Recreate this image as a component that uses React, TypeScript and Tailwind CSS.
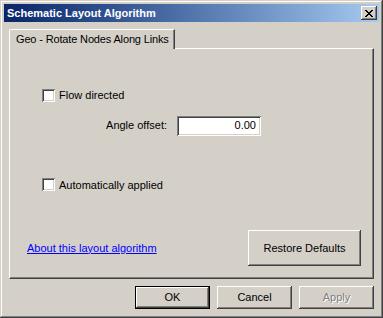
const raised =
  "bg-[#d4d0c8] shadow-[inset_-1px_-1px_#404040,inset_1px_1px_#ffffff,inset_-2px_-2px_#808080,inset_2px_2px_#d4d0c8]";
const sunken =
  "bg-white shadow-[inset_1px_1px_#808080,inset_-1px_-1px_#ffffff,inset_2px_2px_#404040,inset_-2px_-2px_#d4d0c8]";

function CheckBox({ label }: { label: string }) {
  return (
    <div className="flex flex-row items-center gap-[4px]">
      <div className={`w-[13px] h-[13px] ${sunken}`} />
      <span>{label}</span>
    </div>
  );
}

function Button({
  label,
  width,
  height,
  isDefault,
  disabled,
}: {
  label: string;
  width: string;
  height: string;
  isDefault?: boolean;
  disabled?: boolean;
}) {
  return (
    <div
      className={`${width} ${height} ${
        isDefault ? "border border-black" : ""
      } flex`}
    >
      <div
        className={`flex-1 flex items-center justify-center ${raised} ${
          disabled ? "text-[#808080] [text-shadow:1px_1px_#ffffff]" : "text-black"
        }`}
      >
        {label}
      </div>
    </div>
  );
}

export default function App() {
  return (
    <div
      className="w-[383px] h-[318px] bg-[#d4d0c8] p-[4px] flex flex-col text-[11px] text-black shadow-[inset_-1px_-1px_#404040,inset_1px_1px_#d4d0c8,inset_-2px_-2px_#808080,inset_2px_2px_#ffffff]"
      style={{ fontFamily: "Tahoma, 'Liberation Sans', Arial, sans-serif" }}
    >
      {/* title bar */}
      <div className="h-[18px] flex flex-row items-center justify-between pl-[3px] pr-[2px] bg-gradient-to-r from-[#0a246a] to-[#a6caf0]">
        <span className="text-white font-bold text-[11px] leading-none">
          Schematic Layout Algorithm
        </span>
        <div
          className={`w-[16px] h-[14px] flex items-center justify-center ${raised}`}
        >
          <svg width="8" height="7" viewBox="0 0 8 7">
            <path
              d="M0 0h2v1h1v1h2v-1h1v-1h2v1h-1v1h-1v1h-1v1h1v1h1v1h1v1h-2v-1h-1v-1h-2v1h-1v1h-2v-1h1v-1h1v-1h1v-1h-1v-1h-1v-1h-1z"
              fill="black"
            />
          </svg>
        </div>
      </div>

      {/* tabs */}
      <div className="mt-[7px] ml-[5px] mr-[5px] flex flex-col">
        <div className="flex flex-row">
          <div className="w-[166px] h-[20px] flex items-center whitespace-nowrap tracking-[-0.15px] pl-[6px] pb-[1px] border-t border-l border-white border-r border-r-[#404040] rounded-tl-[2px] shadow-[inset_-1px_0_#808080] relative z-10 -mb-[1px] bg-[#d4d0c8]">
            Geo - Rotate Nodes Along Links
          </div>
        </div>
        <div className="h-[231px] border-t border-l border-white border-b border-r border-b-[#404040] border-r-[#404040] shadow-[inset_-1px_-1px_#808080] flex flex-col pl-[32px] pr-[12px]">
          <div className="mt-[38px]">
            <CheckBox label="Flow directed" />
          </div>
          <div className="mt-[12px] flex flex-row items-center">
            <span className="w-[125px] text-right">Angle offset:</span>
            <div
              className={`ml-[10px] w-[84px] h-[20px] flex items-center justify-end pr-[5px] ${sunken}`}
            >
              0.00
            </div>
          </div>
          <div className="mt-[41px]">
            <CheckBox label="Automatically applied" />
          </div>
          <div className="mt-[37px] flex flex-row items-center justify-between -ml-[15px]">
            <span className="text-[#0000ff] underline">
              About this layout algorithm
            </span>
            <Button label="Restore Defaults" width="w-[113px]" height="h-[36px]" />
          </div>
        </div>
      </div>

      {/* dialog buttons */}
      <div className="mt-[7px] mr-[5px] flex flex-row justify-end gap-[7px]">
        <Button label="OK" width="w-[75px]" height="h-[23px]" isDefault />
        <Button label="Cancel" width="w-[75px]" height="h-[23px]" />
        <Button label="Apply" width="w-[75px]" height="h-[23px]" disabled />
      </div>
    </div>
  );
}
